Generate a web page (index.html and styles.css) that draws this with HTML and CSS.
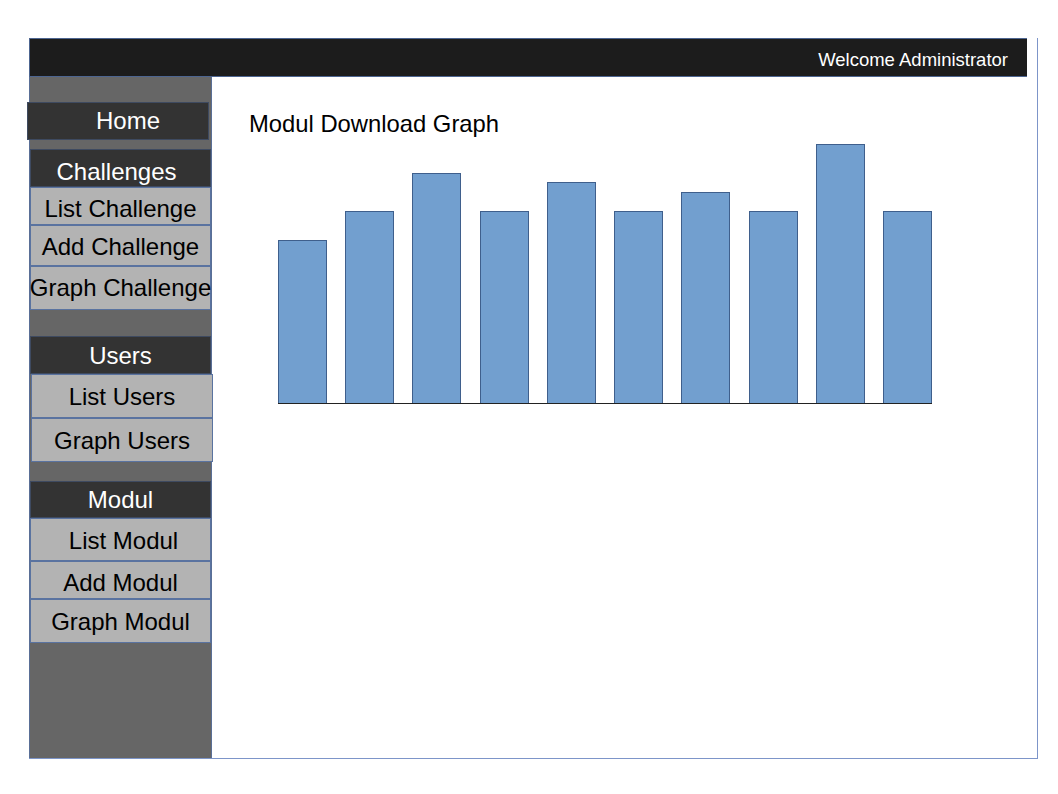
FILE: index.html
```html
<!DOCTYPE html>
<html>
<head>
<meta charset="utf-8">
<link rel="stylesheet" href="styles.css">
</head>
<body>
<div class="frame">
  <div class="topbar"><span class="welcome">Welcome Administrator</span></div>
  <div class="body">
    <nav class="sidebar">
      <div class="item dark home">Home</div>
      <div class="group g1">
        <div class="item dark h38 p8 pull">Challenges</div>
        <div class="item light h38 p6">List Challenge</div>
        <div class="item light h41 p2">Add Challenge</div>
        <div class="item light h44">Graph Challenge</div>
      </div>
      <div class="group g2">
        <div class="item dark h38 p2">Users</div>
        <div class="item light h44 shift p2">List Users</div>
        <div class="item light h44 shift p2">Graph Users</div>
      </div>
      <div class="group g3">
        <div class="item dark h37">Modul</div>
        <div class="item light h43 p2 nudge">List Modul</div>
        <div class="item light h38 p6">Add Modul</div>
        <div class="item light h44 p2">Graph Modul</div>
      </div>
    </nav>
    <main class="main">
      <h1 class="title">Modul Download Graph</h1>
      <div class="chart">
        <div class="bar" style="height:163px"></div>
        <div class="bar" style="height:192px"></div>
        <div class="bar" style="height:230px"></div>
        <div class="bar" style="height:192px"></div>
        <div class="bar" style="height:221px"></div>
        <div class="bar" style="height:192px"></div>
        <div class="bar" style="height:211px"></div>
        <div class="bar" style="height:192px"></div>
        <div class="bar" style="height:259px"></div>
        <div class="bar" style="height:192px"></div>
      </div>
    </main>
  </div>
</div>
</body>
</html>
```
FILE: styles.css
```css
* { box-sizing: border-box; }
html, body { margin: 0; padding: 0; background: #ffffff; }
body { font-family: "Liberation Sans", Arial, sans-serif; }

.frame {
  margin: 38px 0 0 29px;
  width: 1009px;
  height: 721px;
  border-right: 1px solid #7d95c9;
  border-bottom: 1px solid #7d95c9;
  display: flex;
  flex-direction: column;
}

.topbar {
  width: 998px;
  height: 39px;
  flex: none;
  background: #1c1c1c;
  border-top: 1px solid #4d6590;
  border-left: 1px solid #4d6590;
  border-bottom: 1px solid #4d6590;
  display: flex;
  align-items: center;
  justify-content: flex-end;
  padding-right: 19px;
  padding-top: 4px;
}
.welcome {
  color: #ffffff;
  font-size: 18.5px;
}

.body {
  flex: 1;
  display: flex;
}

.sidebar {
  width: 183px;
  flex: none;
  background: #666666;
  border-left: 1px solid #5a6f96;
  border-right: 1px solid #5a6f96;
  padding-top: 25px;
  display: flex;
  flex-direction: column;
}

.item {
  display: flex;
  align-items: center;
  justify-content: center;
  font-size: 24px;
  white-space: nowrap;
  border: 1px solid #5a73a0;
}
.dark { background: #333333; color: #ffffff; border-color: #3e4a60; }
.light { background: #b3b3b3; color: #000000; }
.home { height: 38px; margin-left: -3px; margin-right: 2px; padding-left: 20px; }
.h37 { height: 37px; }
.h38 { height: 38px; }
.h41 { height: 41px; }
.h43 { height: 43px; }
.h44 { height: 44px; }
.p2 { padding-top: 2px; }
.p6 { padding-top: 6px; }
.p8 { padding-top: 8px; }
.nudge { padding-left: 6px; }
.pull { padding-right: 8px; }
.shift { margin-left: 1px; margin-right: -2px; }

.group { display: flex; flex-direction: column; }
.g1 { margin-top: 9px; }
.g2 { margin-top: 26px; }
.g3 { margin-top: 19px; }

.main {
  flex: 1;
  padding: 33px 0 0 37px;
}
.title {
  margin: 0;
  font-size: 23.8px;
  font-weight: normal;
  line-height: 28px;
  color: #000000;
}
.chart {
  margin: 6px 0 0 29px;
  width: 654px;
  height: 260px;
  display: flex;
  align-items: flex-end;
  gap: 18.22px;
  border-bottom: 1px solid #222222;
}
.bar {
  width: 49px;
  flex: none;
  background: #729fcf;
  border: 1px solid #3f5f8c;
  border-bottom: none;
}
```
